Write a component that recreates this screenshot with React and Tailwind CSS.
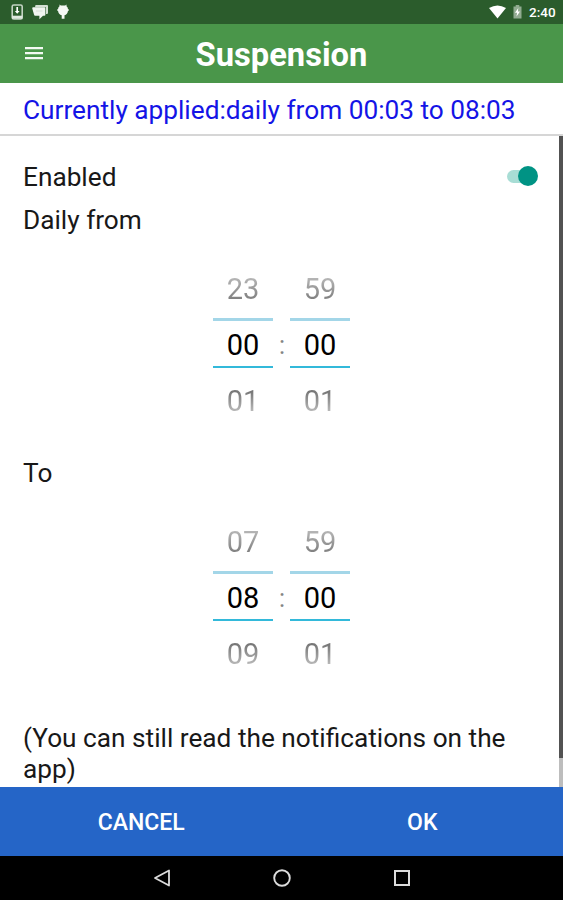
import React from "react";

function StatusBar() {
  return (
    <div className="flex h-6 shrink-0 items-center justify-between bg-[#2b5c2c] pl-[11px] pr-[7px]">
      <div className="flex items-center">
        <svg width="12" height="16" viewBox="0 0 12 16" fill="none">
          <rect x="1.200" y="1" width="10" height="14" rx="1.6" stroke="#c3d3c3" strokeWidth="1.6" />
          <path d="M1 11.7h10.400v3H1z" fill="#dfe8df" />
          <path d="M6.2 3v5.500" stroke="#fff" strokeWidth="1.7" />
          <path d="M3.8 7h4.800L6.2 9.800z" fill="#fff" />
        </svg>
        <svg className="ml-[9px]" width="17" height="16" viewBox="0 0 17 16">
          <path d="M3.5 1H15q1 0 1 1v7q0 1-1 1h-1V3.3H3z" fill="#d3dfd3" />
          <path d="M1.2 3.2h11.2q1 0 1 1v6.6q0 1-1 1H11l-3.6 3.4v-3.4H3.2q-1 0-1.2-1.2L.2 4.2q0-1 1-1z" fill="#f1f5f1" />
          <path d="M4 7h6.500" stroke="#d0dcd0" strokeWidth=".8" />
        </svg>
        <svg className="ml-[8px]" width="12" height="16" viewBox="0 0 12 16" fill="#f5f8f5">
          <path d="M2.500.500 3.800 1.500h4.400L9.500.5V2.300Q11 3.500 11 5.200h.8v1.600H11Q10.500 10.600 7.500 11.200v3.500H4.700v-3.500Q1.500 10.600 1 6.800H.2V5.200H1Q1 3.500 2.500 2.300z" />
        </svg>
      </div>
      <div className="flex items-center">
        <svg width="17" height="14" viewBox="0 0 17 14" fill="#fff">
          <path d="M0 3Q8.500-2 17 3L8.500 13.500z" />
        </svg>
        <svg className="ml-[7px]" width="9" height="14" viewBox="0 0 9 14">
          <path d="M2.700 0h3.600v1.500H8.500V13.500H.5V1.500h2.200z" fill="#91ab91" />
          <path d="M5.300 3 2 7.800h2.100L3.500 11.500 7 6.500H4.900z" fill="#fff" />
        </svg>
        <span className="ml-[7px] w-[27px] whitespace-nowrap text-[13.500px] font-medium leading-6 text-white">2:40</span>
      </div>
    </div>
  );
}

function Header() {
  return (
    <header className="grid h-[59px] shrink-0 grid-cols-[25px_1fr_25px] items-center bg-[#4a964a]">
      <svg className="ml-[25px] overflow-visible" width="18" height="13" viewBox="0 0 18 13" stroke="#f4faf4" strokeWidth="2.200">
        <path d="M0 1.200h18M0 6.200h18M0 11.200h18" />
      </svg>
      <h1 className="pt-[3px] text-center text-[32.700px] font-bold leading-[40px] text-white">Suspension</h1>
    </header>
  );
}

function Wheel({ values }) {
  const [before, current, after] = values;
  return (
    <div className="flex w-[60px] flex-col text-center text-[29px] leading-[45px] text-black">
      <div className="h-[57px] pt-[6px]">
        <span className="bg-linear-to-b from-[#b4b4b4] from-20% to-[#7c7c7c] to-85% bg-clip-text text-transparent">{before}</span>
      </div>
      <div className="h-[50px] border-t-[3px] border-b-2 border-t-[#a3d6e8] border-b-[#33b9da] pt-[2px]">{current}</div>
      <div className="h-[61px] pt-[11px]">
        <span className="bg-linear-to-b from-[#757575] from-20% to-[#bebebe] to-85% bg-clip-text text-transparent">{after}</span>
      </div>
    </div>
  );
}

function TimePicker({ hours, minutes }) {
  return (
    <div className="flex h-[168px] items-center justify-center">
      <Wheel values={hours} />
      <div className="w-[17px] pl-px pt-[2px] text-center text-[25px] leading-[30px] text-[#858585]">:</div>
      <Wheel values={minutes} />
    </div>
  );
}

function Toggle() {
  return (
    <div className="relative mr-[21px] flex h-5 w-[31px] items-center" role="switch" aria-checked="true">
      <div className="h-[13px] w-[25px] rounded-full bg-[#a8ddd5]" />
      <div className="absolute right-0 top-0 size-[20px] rounded-full bg-[#009384]" />
    </div>
  );
}

export default function App() {
  return (
    <div className="flex h-[900px] w-[563px] flex-col overflow-hidden bg-white font-['Roboto',sans-serif] text-[26.220px] leading-[31px] text-[#181818]">
      <StatusBar />
      <Header />
      <div className="h-[53px] shrink-0 whitespace-nowrap border-b-2 border-[#d6d6d6] pl-[23px] pt-[12px] text-[#1414e6]">
        Currently applied:daily from 00:03 to 08:03
      </div>
      <main className="flex h-[651px] shrink-0">
        <div className="flex min-w-0 flex-1 flex-col pt-[20px]">
          <div className="flex h-10 items-center justify-between pl-[23px]">
            <span className="pt-[2px]">Enabled</span>
            <Toggle />
          </div>
          <div className="mt-[9px] pl-[23px]">Daily from</div>
          <div className="mt-[25px] pl-1">
            <TimePicker hours={["23", "00", "01"]} minutes={["59", "00", "01"]} />
          </div>
          <div className="mt-[29px] pl-[23px]">To</div>
          <div className="mt-[25px] pl-1">
            <TimePicker hours={["07", "08", "09"]} minutes={["59", "00", "01"]} />
          </div>
          <p className="ml-[23px] mt-[41px] w-[500px]">(You can still read the notifications on the app)</p>
        </div>
        <div className="w-1 bg-[#bdbdbd]">
          <div className="h-[622px] bg-[#525252]" />
        </div>
      </main>
      <footer className="grid h-[69px] shrink-0 grid-cols-2 bg-[#2565c7] text-[23px] font-medium text-white">
        <button className="pl-px pt-[2px]">CANCEL</button>
        <button className="pt-[2px]">OK</button>
      </footer>
      <nav className="flex flex-1 items-center justify-center gap-[102px] bg-black">
        <svg width="18" height="18" viewBox="0 0 18 18" fill="none" stroke="#dcdcdc" strokeWidth="1.800" strokeLinejoin="round">
          <path d="M16 1.500v15L2 9z" />
        </svg>
        <svg width="18" height="18" viewBox="0 0 18 18" fill="none" stroke="#dcdcdc" strokeWidth="1.900">
          <circle cx="9" cy="9" r="7.800" />
        </svg>
        <svg width="18" height="18" viewBox="0 0 18 18" fill="none" stroke="#dcdcdc" strokeWidth="2">
          <rect x="2" y="2" width="14" height="14" />
        </svg>
      </nav>
    </div>
  );
}
